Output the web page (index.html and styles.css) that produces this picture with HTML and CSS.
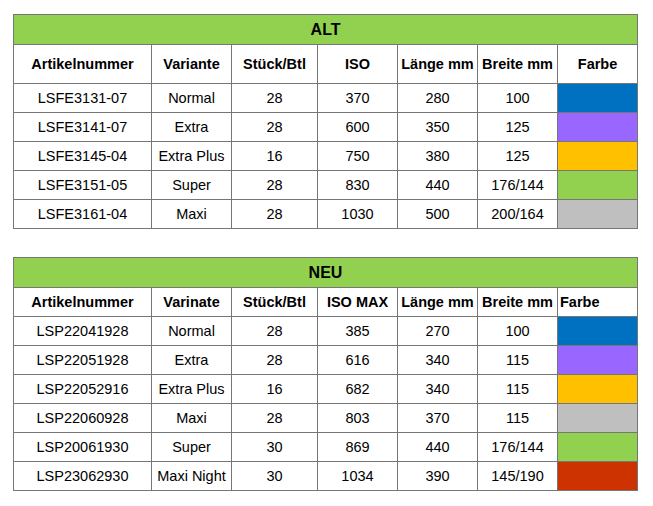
FILE: index.html
```html
<!DOCTYPE html>
<html lang="de">
<head>
<meta charset="utf-8">
<link rel="stylesheet" href="styles.css">
</head>
<body>
<div class="page">
<table class="grid">
  <colgroup>
    <col class="c1"><col class="c2"><col class="c3"><col class="c4"><col class="c5"><col class="c6"><col class="c7">
  </colgroup>
  <tr class="title"><td colspan="7">ALT</td></tr>
  <tr class="head tall">
    <th>Artikelnummer</th><th>Variante</th><th>Stück/Btl</th><th>ISO</th><th>Länge mm</th><th>Breite mm</th><th>Farbe</th>
  </tr>
  <tr><td>LSFE3131-07</td><td>Normal</td><td>28</td><td>370</td><td>280</td><td>100</td><td class="sw blue"></td></tr>
  <tr><td>LSFE3141-07</td><td>Extra</td><td>28</td><td>600</td><td>350</td><td>125</td><td class="sw purple"></td></tr>
  <tr><td>LSFE3145-04</td><td>Extra Plus</td><td>16</td><td>750</td><td>380</td><td>125</td><td class="sw orange"></td></tr>
  <tr><td>LSFE3151-05</td><td>Super</td><td>28</td><td>830</td><td>440</td><td>176/144</td><td class="sw green"></td></tr>
  <tr><td>LSFE3161-04</td><td>Maxi</td><td>28</td><td>1030</td><td>500</td><td>200/164</td><td class="sw grey"></td></tr>
</table>

<table class="grid">
  <colgroup>
    <col class="c1"><col class="c2"><col class="c3"><col class="c4"><col class="c5"><col class="c6"><col class="c7">
  </colgroup>
  <tr class="title"><td colspan="7">NEU</td></tr>
  <tr class="head">
    <th>Artikelnummer</th><th>Varinate</th><th>Stück/Btl</th><th>ISO MAX</th><th>Länge mm</th><th>Breite mm</th><th class="left">Farbe</th>
  </tr>
  <tr><td>LSP22041928</td><td>Normal</td><td>28</td><td>385</td><td>270</td><td>100</td><td class="sw blue"></td></tr>
  <tr><td>LSP22051928</td><td>Extra</td><td>28</td><td>616</td><td>340</td><td>115</td><td class="sw purple"></td></tr>
  <tr><td>LSP22052916</td><td>Extra Plus</td><td>16</td><td>682</td><td>340</td><td>115</td><td class="sw orange"></td></tr>
  <tr><td>LSP22060928</td><td>Maxi</td><td>28</td><td>803</td><td>370</td><td>115</td><td class="sw grey"></td></tr>
  <tr><td>LSP20061930</td><td>Super</td><td>30</td><td>869</td><td>440</td><td>176/144</td><td class="sw green"></td></tr>
  <tr><td>LSP23062930</td><td>Maxi Night</td><td>30</td><td>1034</td><td>390</td><td>145/190</td><td class="sw red"></td></tr>
</table>
</div>
</body>
</html>
```

FILE: styles.css
```css
html, body {
  margin: 0;
  padding: 0;
  background: #ffffff;
}

.page {
  padding: 14px 0 0 13px;
  display: flex;
  flex-direction: column;
  gap: 28px;
  align-items: flex-start;
}

.grid {
  border-collapse: collapse;
  table-layout: fixed;
  width: 625px;
  font-family: "Liberation Sans", Arial, sans-serif;
  font-size: 14.5px;
  color: #000;
}

.c1 { width: 138px; }
.c2 { width: 80px; }
.c3 { width: 86px; }
.c4 { width: 80px; }
.c5 { width: 80px; }
.c6 { width: 80px; }
.c7 { width: 80px; }

.grid td,
.grid th {
  border: 1px solid #767676;
  padding: 0;
  text-align: center;
  vertical-align: middle;
  line-height: 17px;
  white-space: nowrap;
  overflow: hidden;
}

.grid tr { height: 29px; }
.grid tr.title { height: 30px; }
.grid tr.tall { height: 39px; }

.title td {
  background: #92d050;
  font-weight: bold;
  font-size: 16px;
}

.head th { font-weight: bold; }
.head th.left { text-align: left; padding-left: 2px; }

.sw.blue { background: #0070c0; }
.sw.purple { background: #9966ff; }
.sw.orange { background: #ffc000; }
.sw.green { background: #92d050; }
.sw.grey { background: #bfbfbf; }
.sw.red { background: #cc3300; }
```
